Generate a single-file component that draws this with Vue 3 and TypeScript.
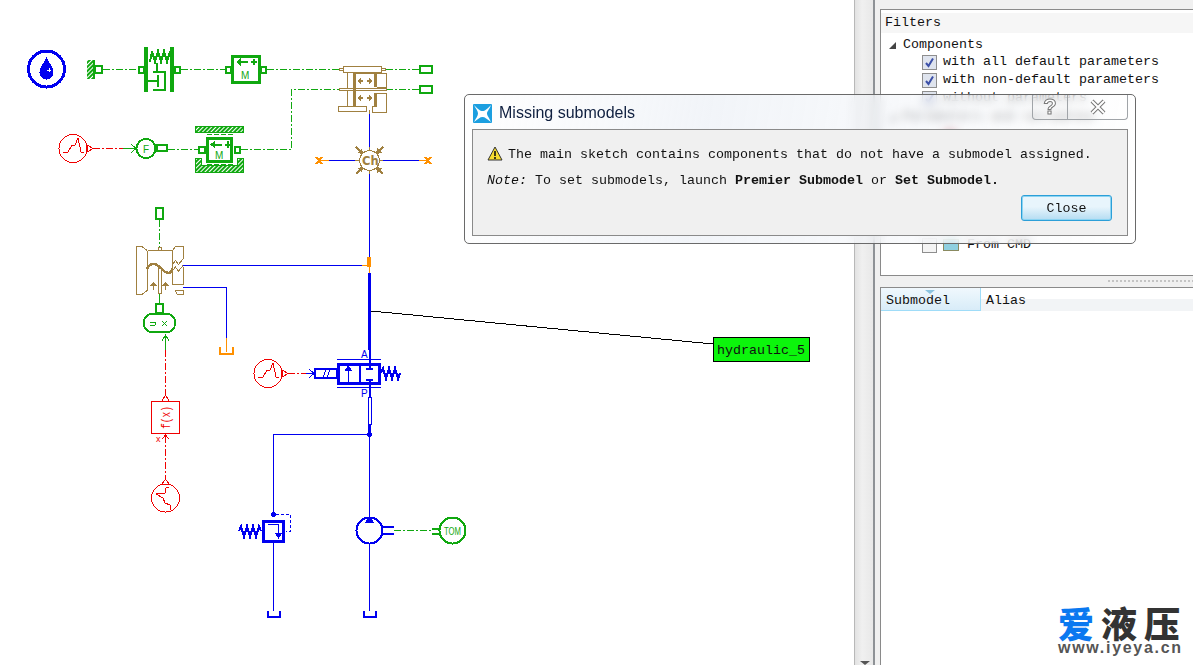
<script setup lang="ts">
const filters = ['with all default parameters', 'with non-default parameters', 'without parameters']
</script>

<template>
  <div class="page">
    <svg class="sketch" width="855" height="665" viewBox="0 0 855 665" shape-rendering="crispEdges" fill="none">
      <defs>
        <pattern id="hatch" width="3" height="3" patternUnits="userSpaceOnUse" patternTransform="rotate(45)">
          <rect width="1.500" height="3" fill="#10a810" />
        </pattern>
      </defs>

      <!-- fluid icon -->
      <g>
        <circle cx="46.500" cy="69" r="18" stroke="#0000f0" stroke-width="3" />
        <path d="M46.500 57c2 6 7 9 7 15.500a7 7 0 0 1-14 0c0-6.500 5-9.500 7-15.500z" fill="#0000f0" />
        <path d="M47 70h4M49 68v4" stroke="#fff" />
      </g>

      <!-- wall -->
      <rect x="87" y="60" width="6" height="19" fill="url(#hatch)" />
      <path d="M94 60v19" stroke="#10a810" stroke-width="2" />
      <rect x="95" y="66" width="7" height="7" stroke="#10a810" stroke-width="2" />

      <!-- spring damper -->
      <g stroke="#10a810" stroke-width="2">
        <rect x="145" y="48" width="2" height="43" />
        <rect x="171" y="48" width="2" height="43" />
        <rect x="139" y="67" width="5" height="6" />
        <rect x="175" y="67" width="5" height="6" />
        <path d="M153 72h12v18h-12M157 63v9M148 81h10M158 75v12" />
      </g>
      <path d="M150 62l2-11 3 11 3-11 3 11 3-11 3 11 3-11" stroke="#10a810" stroke-width="2" />

      <!-- mass 1 -->
      <rect x="232.500" y="56.500" width="27" height="26" stroke="#10a810" stroke-width="3" />
      <rect x="226" y="67" width="5" height="6" stroke="#10a810" stroke-width="2" />
      <rect x="261" y="67" width="5" height="6" stroke="#10a810" stroke-width="2" />
      <path d="M240 62h8M254 59v6M251 62h6" stroke="#10a810" stroke-width="2" />
      <path d="M236 62l5-4v8z" fill="#10a810" />
      <text x="241" y="79" class="gtxt">M</text>

      <!-- green signal lines -->
      <g stroke="#10a810" stroke-dasharray="7 2 2 2">
        <path d="M103 69.500h36M181 69.500h44M267 69.500h72M386 69.500h33M386 89.500h33" />
        <path d="M241 149.500h50.500v-60h48" />
        <path d="M168 149.500h30" />
      </g>
      <rect x="420" y="66" width="12" height="7" stroke="#10a810" stroke-width="2" />
      <rect x="420" y="86" width="12" height="7" stroke="#10a810" stroke-width="2" />

      <!-- double clutch actuator -->
      <g stroke="#a08040">
        <rect x="343.500" y="66.500" width="38" height="6" />
        <rect x="339.500" y="68.500" width="4" height="2" />
        <rect x="381.500" y="68.500" width="4" height="2" />
        <rect x="339.500" y="88.500" width="47" height="2" />
        <rect x="338.500" y="106.500" width="28" height="5" />
        <path d="M347.500 73v15M347.500 91v15M356 73.500h18M377 73.500h9.500v14h-9.500M377 93.500h9.500v18.500h-14.500v-5.500h5" />
      </g>
      <rect x="353" y="73" width="3" height="33" fill="#a08040" />
      <rect x="374" y="73" width="3" height="14" fill="#a08040" />
      <rect x="374" y="93" width="3" height="13" fill="#a08040" />
      <path d="M360 81h3M367 81h3M360 98h3M367 98h3" stroke="#a08040" stroke-width="2" />
      <path d="M361 77.500v7l-4-3.500zM369 77.500v7l4-3.500zM361 94.500v7l-4-3.500zM369 94.500v7l4-3.500z" fill="#a08040" stroke="none" />
      <path d="M369.500 110v4" stroke="#a08040" />

      <!-- connection Ch -->
      <path d="M369.500 114v33M369.500 174v83M329 160.500h26M383 160.500h36" stroke="#0000f0" />
      <path d="M319 160.500h10M419 160.500h9" stroke="#ff9000" />
      <path d="M316 157l6 7M322 157l-6 7M425 157l6 7M431 157l-6 7" stroke="#ff9000" stroke-width="2" />
      <circle cx="369.500" cy="160.500" r="10" stroke="#a08040" />
      <path d="M369.500 147v3M369.500 171v3M355 160.500h4M380 160.500h3" stroke="#a08040" />
      <text x="362" y="165" class="btxt">Ch</text>
      <g stroke="#a08040" stroke-width="2">
        <path d="M356 147l4 4M383 147l-4 4M356 174l4-4M383 174l-4-4" />
      </g>
      <path d="M363 154l-6-1 5-5zM376 154l6-1-5-5zM363 167l-6 1 5 5zM376 167l6 1-5 5z" fill="#a08040" />

      <!-- source + force -->
      <g stroke="#f00000">
        <circle cx="73" cy="148.500" r="14" />
        <path d="M87 145v7l6-3.500z" />
        <path d="M63 152h5l4-7h3l3-7 3 14h3" />
      </g>
      <path d="M93 148.500h30" stroke="#f00000" stroke-width="1.500" stroke-dasharray="7 2 2 2" />
      <path d="M123 148.500h13M131 144l5 4.500-5 4.500" stroke="#10a810" />
      <circle cx="146" cy="148.500" r="9.500" stroke="#10a810" stroke-width="2" />
      <text x="143" y="153" class="gtxt">F</text>
      <rect x="157" y="145" width="10" height="6" stroke="#10a810" stroke-width="2" />

      <!-- mass with stiction -->
      <rect x="195.500" y="126.500" width="48" height="6" fill="url(#hatch)" stroke="#10a810" />
      <path d="M195.500 158.500h6v7h35.500v-7h6v14h-47.500z" fill="url(#hatch)" stroke="#10a810" />
      <path d="M207 134.500h27M207 164.500h27" stroke="#10a810" stroke-dasharray="5 2" />
      <rect x="207.500" y="138.500" width="24" height="23" stroke="#10a810" stroke-width="3" />
      <rect x="199" y="147" width="6" height="6" stroke="#10a810" stroke-width="2" />
      <rect x="235" y="147" width="5" height="6" stroke="#10a810" stroke-width="2" />
      <path d="M214 144.500h8M228 141v7M225 144.500h6" stroke="#10a810" stroke-width="2" />
      <path d="M210 144.500l5-4v8z" fill="#10a810" />
      <text x="215" y="159" class="gtxt">M</text>

      <!-- cam -->
      <rect x="156" y="208" width="7" height="11" stroke="#10a810" stroke-width="2" />
      <path d="M159.500 220v27" stroke="#10a810" stroke-dasharray="7 2 2 2" />
      <g stroke="#a08040">
        <path d="M147 250.500l-5-4h-6v48h6l5-4" />
        <path d="M147.500 250.500v40M147.500 250.500h25v34h11M172.500 250.500l3-4h8v12l-5 6-3-4-3 4" />
        <path d="M172.500 271l3-4 3 4 5-6v0M183.500 267v17" />
        <path d="M175 290h8.500v4.500h-6z" />
        <path d="M158.500 268v25h3v-25M158.500 250v-3h3v3" />
      </g>
      <path d="M147 269c2-5 6-6 10-4s6 7 11 8c3 0 4-2 4-5" stroke="#a08040" stroke-width="2.500" />
      <path d="M153.500 283v7M165.500 283v7" stroke="#a08040" />
      <path d="M150 286l3.500-4 3.500 4zM162 286l3.500-4 3.500 4z" fill="#a08040" />
      <path d="M183 265.500h179M183 287.500h43.500v51" stroke="#0000f0" />
      <path d="M362 265.500h6M369.500 267v6M226.500 338v14" stroke="#ff9000" />
      <rect x="367" y="257" width="4" height="10" fill="#ff9000" />
      <path d="M220 347v7h13v-7" stroke="#ff9000" stroke-width="2" />

      <!-- converter oval -->
      <path d="M159.500 294v9" stroke="#10a810" />
      <rect x="156" y="304" width="7" height="9" stroke="#10a810" stroke-width="2" />
      <rect x="144" y="314" width="31" height="18" rx="8" stroke="#10a810" stroke-width="2" />
      <path d="M150 322h5l1 1-1 2h-5M162 321l5 5M167 321l-5 5" stroke="#10a810" />
      <path d="M165.500 335v15M162 341l3.500-6 3.500 6" stroke="#10a810" />

      <!-- f(x) chain -->
      <path d="M165.500 350v46M165.500 436v43" stroke="#f00000" stroke-dasharray="7 2 2 2" />
      <rect x="151.500" y="401.500" width="28" height="32" stroke="#f00000" />
      <path d="M162 401l3.500-6 3.500 6" stroke="#f00000" />
      <text class="rtxt" transform="translate(170 429) rotate(-90)" textLength="23" lengthAdjust="spacingAndGlyphs">f(x)</text>
      <text x="156" y="442" class="rsmall">x</text>
      <path d="M162 439l3.500-4 3.500 4" stroke="#f00000" />
      <g stroke="#f00000">
        <circle cx="165.500" cy="498" r="14" />
        <path d="M162 484l3.500-5 3.500 5z" />
        <path d="M169 487l-3 1-1 5-9 1 7 4 2 5 5 2v5" />
      </g>

      <!-- main line + tag leader -->
      <path d="M369.500 273v77" stroke="#0000f0" stroke-width="3" />
      <path d="M371 311l342 33" stroke="#000" />

      <!-- directional valve -->
      <text x="361" y="358" class="btxt2">A</text>
      <path d="M337 359.500h44M337 387.500h44" stroke="#0000f0" />
      <rect x="338.500" y="364.500" width="41" height="19" stroke="#0000f0" stroke-width="3" />
      <path d="M359.500 364v19" stroke="#0000f0" stroke-width="2" />
      <path d="M348.500 366v17" stroke="#0000f0" />
      <path d="M348.500 365l4 6h-8z" fill="#0000f0" />
      <path d="M369.500 350v18M366 368.500h7M366 379.500h7M369.500 379v18" stroke="#0000f0" stroke-width="2" />
      <rect x="315" y="369" width="22" height="9" stroke="#0000f0" stroke-width="2" />
      <path d="M323 378l3-9M327 378l3-9" stroke="#0000f0" />
      <g stroke="#f00000">
        <circle cx="268" cy="373.500" r="14" />
        <path d="M282 370v7l6-3.500z" />
        <path d="M258 377h5l4-7h3l3-7 3 14h3" />
      </g>
      <path d="M288 373.500h18" stroke="#f00000" stroke-width="1.500" stroke-dasharray="7 2 2 2" />
      <path d="M306 373.500h8M309 369l5 4.500-5 4.500" stroke="#0000f0" />
      <path d="M381 373l2-5 3 11 3-11 3 11 3-11 3 11 2-6" stroke="#0000f0" stroke-width="2" />
      <text x="361" y="397" class="btxt2">P</text>
      <rect x="368" y="397.500" width="3" height="27" stroke="#0000f0" />
      <path d="M369.500 425v9" stroke="#0000f0" stroke-width="3" />
      <circle cx="369.500" cy="434.500" r="2.500" fill="#0000f0" />
      <path d="M369.500 434v83M369.500 434.500h-96v80M369.500 544v67M273.500 543v68" stroke="#0000f0" />

      <!-- relief valve -->
      <circle cx="273.500" cy="514.500" r="2.500" fill="#0000f0" />
      <path d="M276 514.500h14.500v17h-5" stroke="#0000f0" stroke-dasharray="3 2" />
      <rect x="263.500" y="521.500" width="20" height="20" stroke="#0000f0" stroke-width="3" />
      <path d="M268 524.500h10.500v9" stroke="#0000f0" />
      <path d="M275 533h7l-3.500 6z" fill="#0000f0" />
      <path d="M239 531l2-5 3 11 3-11 3 11 3-11 3 11 3-11 2 5" stroke="#0000f0" stroke-width="2" />
      <path d="M268 611v6h12v-6M364 611v6h12v-6" stroke="#0000f0" stroke-width="2.500" />

      <!-- pump -->
      <circle cx="369.500" cy="530.500" r="13" stroke="#0000f0" stroke-width="2" />
      <path d="M369.500 516l5 7h-10z" fill="#0000f0" />
      <path d="M383 527h11M383 534h11" stroke="#0000f0" stroke-width="2" />
      <path d="M394 530.500h38" stroke="#10a810" stroke-dasharray="7 2 2 2" />
      <path d="M432 529h8M432 534h8" stroke="#10a810" stroke-width="2" />
      <circle cx="452.500" cy="530.500" r="13" stroke="#10a810" stroke-width="2" />
      <text x="444" y="534.500" class="gtxt" textLength="17" lengthAdjust="spacingAndGlyphs">TOM</text>
    </svg>

    <div class="tag">hydraulic_5</div>

    <aside class="side">
      <div class="scrollcol"><span class="sdown"></span></div>
      <div class="panels">
        <section class="filters">
          <header class="fhead">Filters</header>
          <div class="tree">
            <div class="row top"><span class="tri"></span>Components</div>
            <div v-for="f in filters" :key="f" class="row item">
              <span class="cb"><svg width="13" height="13" viewBox="0 0 13 13" fill="none"><path d="M3 7l2.500 3L10 2.500" stroke="#3c50a8" stroke-width="2" /></svg></span>{{ f }}
            </div>
            <div class="row top second"><span class="tri"></span>Parameters and variables</div>
            <div class="row item"><span class="dot"></span></div>
            <div class="row item last">
              <span class="cb empty"></span><span class="swatch"></span>From CMD
            </div>
          </div>
        </section>
        <div class="splitter"><span class="grip"></span></div>
        <section class="table">
          <div class="thead">
            <div class="th sorted"><span class="sort"></span>Submodel</div>
            <div class="th">Alias</div>
          </div>
        </section>
      </div>
    </aside>

    <div class="dialog">
      <div class="titlebar">
        <svg class="appicon" width="19" height="19" viewBox="0 0 19 19">
          <rect width="19" height="19" rx="1" fill="#1c9fe0" />
          <path d="M1 1c4 4 6 6 8.500 6S14 5 18 1c-2 5-4 6.500-4 8.500s2 4 4 8.500c-4-3-6-5-8.500-5S5 15 1 18c2-4 4-6 4-8.500S3 5 1 1z" fill="#fff" />
        </svg>
        <span class="title">Missing submodels</span>
        <div class="winbtns">
          <span class="wbtn help">?</span>
          <span class="wbtn close">
            <svg width="18" height="16" viewBox="0 0 18 16" fill="none">
              <path d="M3 2l12 12M15 2L3 14" stroke="#777" stroke-width="4" />
              <path d="M3 2l12 12M15 2L3 14" stroke="#fff" stroke-width="2" />
            </svg>
          </span>
        </div>
      </div>
      <div class="body">
        <p class="line">
          <svg class="warn" width="16" height="15" viewBox="0 0 16 15"><path d="M8 1l7 13H1z" fill="#f7dc30" stroke="#333" stroke-linejoin="round" /><path d="M8 5v5M8 11v2" stroke="#111" stroke-width="1.600" /></svg>
          The main sketch contains components that do not have a submodel assigned.
        </p>
        <p class="line"><em>Note:</em> To set submodels, launch <b>Premier Submodel</b> or <b>Set Submodel.</b></p>
        <div class="actions"><button class="btn">Close</button></div>
      </div>
    </div>

    <div class="logo">
      <div class="logo-cn"><span class="blue">爱</span>液压</div>
      <div class="logo-url">www.iyeya.cn</div>
    </div>
  </div>
</template>

<style>
html, body { margin: 0; background: #fff; overflow: hidden; }
</style>

<style scoped>
.page { position: relative; width: 1193px; height: 665px; overflow: hidden; background: #fff; font-family: "Liberation Mono", monospace; font-size: 13.33px; color: #111; }
.sketch { position: absolute; left: 0; top: 0; }
.gtxt { font: 10px "Liberation Sans", sans-serif; fill: #10a810; }
.btxt { font: bold 11.500px "DejaVu Sans", sans-serif; fill: #a08040; }
.btxt2 { font: 10px "Liberation Sans", sans-serif; fill: #0000f0; }
.rtxt { font: 13px "Liberation Mono", monospace; fill: #f00000; }
.rsmall { font: 9px "Liberation Sans", sans-serif; fill: #f00000; }
.tag { position: absolute; left: 713px; top: 337px; width: 92px; height: 23px; border: 1px solid #000; background: #0cf50c; line-height: 25px; padding-left: 3px; }
.side { position: absolute; left: 854px; top: 0; width: 339px; height: 665px; display: flex; background: #f0f0f0; }
.scrollcol { position: relative; width: 21px; background: linear-gradient(90deg, #e2e2e2, #f0f0f0 40%, #e8e8e8); border-left: 1px solid #b8b8b8; border-right: 2px solid #8e9296; box-sizing: border-box; margin-right: 5px; }
.sdown { position: absolute; left: 5px; bottom: 0; width: 0; height: 0; border-left: 5px solid transparent; border-right: 5px solid transparent; border-top: 4px solid #555; }
.panels { flex: 1; display: flex; flex-direction: column; padding-top: 9px; }
.filters { height: 267px; background: #fff; border: 1px solid #8a8a8a; border-right: 0; box-sizing: border-box; padding-top: 3px; overflow: hidden; }
.fhead { height: 20px; line-height: 20px; padding-left: 4px; background: #f6f6f6; }
.tree { padding-top: 4px; }
.row { height: 18px; line-height: 18px; white-space: pre; display: flex; align-items: center; }
.row.top { padding-left: 8px; height: 16px; line-height: 16px; }
.row.second { margin-top: 2px; }
.tri { width: 0; height: 0; border-left: 7px solid transparent; border-bottom: 7px solid #444; margin-right: 7px; }
.row.item { padding-left: 41px; }
.row.last { margin-top: 93px; }
.cb { width: 13px; height: 13px; border: 1px solid #8e8e8e; background: #dfe4ee; margin-right: 6px; display: flex; }
.cb.empty { background: #f4f4f4; }
.swatch { width: 14px; height: 10px; background: #8fd0e0; border: 1px solid #8a8a60; margin-right: 8px; }
.dot { width: 14px; height: 8px; border-radius: 50%; background: #a02030; margin-left: 21px; }
.splitter { height: 11px; position: relative; }
.grip { position: absolute; right: 0; top: 4px; width: 85px; height: 2px; background: repeating-linear-gradient(90deg, #c4c4c4 0 2px, transparent 2px 4px); }
.table { flex: 1; background: #fff; border: 1px solid #8a8a8a; border-right: 0; border-bottom: 0; }
.thead { display: flex; height: 23px; background: linear-gradient(#fff 50%, #f2f4f6 50%); }
.th { padding-left: 5px; line-height: 26px; width: 94px; position: relative; }
.th.sorted { background: linear-gradient(#f0f8fd, #d8ecf8); border-right: 1px solid #9fdcf8; border-bottom: 1px solid #9fdcf8; }
.sort { position: absolute; left: 44px; top: 2px; width: 0; height: 0; border-left: 5px solid transparent; border-right: 5px solid transparent; border-top: 4px solid #8cc4e0; }
.dialog { position: absolute; left: 464px; top: 94px; width: 672px; height: 150px; box-sizing: border-box; border: 1px solid #6a6a6a; border-radius: 5px; background: linear-gradient(100deg, rgba(255,255,255,.85), rgba(236,240,246,.7) 35%, rgba(255,255,255,.55)); -webkit-backdrop-filter: blur(5px); backdrop-filter: blur(5px); display: flex; flex-direction: column; padding: 0 7px 7px; }
.titlebar { height: 34px; display: flex; align-items: center; position: relative; }
.appicon { margin: 2px 7px 0 1px; }
.title { font: 16px "Liberation Sans", sans-serif; color: #102040; margin-top: 2px; }
.winbtns { position: absolute; right: 0; top: 0; display: flex; height: 24px; border: 1px solid #a0a4a8; border-top: 0; border-radius: 0 0 4px 4px; }
.wbtn { display: flex; align-items: center; justify-content: center; height: 24px; }
.help { width: 34px; border-right: 1px solid #a0a4a8; font: bold 22px "Liberation Sans", sans-serif; color: #fff; -webkit-text-stroke: 1px #777; }
.close { width: 59px; }
.body { flex: 1; background: #f0f0f0; border: 1px solid #8a8a8a; padding: 12px 0 0 14px; position: relative; }
.line { margin: 0; height: 26px; line-height: 26px; white-space: pre; }
.warn { vertical-align: -3px; margin-right: -3px; }
.actions { position: absolute; right: 15px; bottom: 14px; }
.btn { display: block; width: 91px; height: 26px; font: 13.33px "Liberation Mono", monospace; color: #111; border: 1px solid #2c9fd8; border-radius: 3px; background: linear-gradient(#e8f5fc 45%, #b4dcf2); box-shadow: inset 0 0 0 1px #8cd4f2; padding: 0; }
.logo { position: absolute; left: 1058px; top: 604px; width: 130px; }
.logo-cn { font: 900 36px "Noto Sans CJK SC", sans-serif; color: #333; line-height: 37px; height: 37px; letter-spacing: 7px; white-space: nowrap; }
.blue { color: #0a78f0; }
.logo-url { font: bold 16px "Liberation Sans", sans-serif; color: #555; line-height: 14px; letter-spacing: 1.700px; white-space: nowrap; }
</style>
